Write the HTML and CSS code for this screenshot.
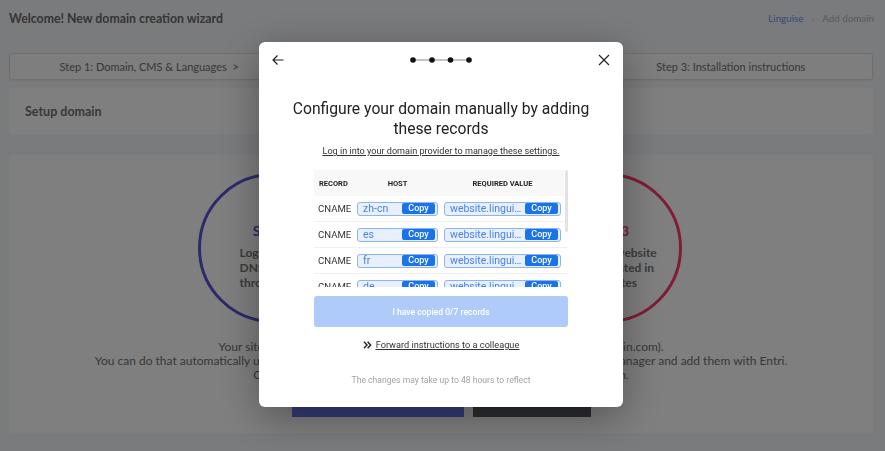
FILE: index.html
```html
<!DOCTYPE html>
<html>
  <head>
    <title>New domain creation wizard</title>
    <link rel="stylesheet" href="styles.css">
  </head>
  <body>
    <div class="page">
      <header class="topbar">
        <h1 class="page-title">Welcome! New domain creation wizard</h1>
        <nav class="crumbs">
          <a href="#">Linguise</a>
          <span class="sep">&rsaquo;</span>
          <span>Add domain</span>
        </nav>
      </header>

      <div class="steps">
        <div class="step step-first">Step 1: Domain, CMS &amp; Languages &nbsp;&gt;</div>
        <div class="step">Step 2: DNS configuration &nbsp;&gt;</div>
        <div class="step step-last">Step 3: Installation instructions</div>
      </div>

      <div class="card setup-head">Setup domain</div>

      <div class="card setup-body">
        <div class="circles">
          <div class="circle circle-blue">
            <h3>Step 1</h3>
            <p>Log in to your<br />DNS provider<br />through Entri</p>
          </div>
          <div class="circle circle-green">
            <h3>Step 2</h3>
            <p>Entri adds<br />the DNS records<br />for you</p>
          </div>
          <div class="circle circle-red">
            <h3>Step 3</h3>
            <p>Your new website<br />gets translated in<br />a few minutes</p>
          </div>
        </div>
        <div class="info">
          <p>Your site must be linked to Linguise through its DNS records (www.yourdomain.com).</p>
          <p>You can do that automatically using Entri: log in to a provider, Entri finds the records for your DNS manager and add them with Entri.</p>
          <p>Or you can copy each record and add it by yourself in your own domain.</p>
        </div>
        <div class="actions">
          <button class="btn btn-entri">Connect automatically with Entri</button>
          <button class="btn btn-dark">Add records manually</button>
        </div>
      </div>
    </div>

    <div class="overlay"></div>

    <div class="modal">
      <div class="modal-top">
        <button class="icon-btn" aria-label="Back">
          <svg width="12" height="12" viewBox="0 0 12 12">
            <path d="M11.5 6H1M5.5 1.5L1 6l4.5 4.5" fill="none" stroke="#222" stroke-width="1.2" />
          </svg>
        </button>
        <svg class="stepper" width="62" height="8" viewBox="0 0 62 8">
          <line x1="3" y1="4" x2="59" y2="4" stroke="#8a8a8a" stroke-width="1" />
          <circle cx="3" cy="4" r="2.8" fill="#111" />
          <circle cx="22" cy="4" r="2.8" fill="#111" />
          <circle cx="40.5" cy="4" r="2.8" fill="#111" />
          <circle cx="59" cy="4" r="2.8" fill="#111" />
        </svg>
        <button class="icon-btn" aria-label="Close">
          <svg width="12" height="12" viewBox="0 0 12 12">
            <path d="M1 1l10 10M11 1L1 11" fill="none" stroke="#222" stroke-width="1.2" />
          </svg>
        </button>
      </div>

      <h2 class="modal-title">Configure your domain manually by adding these records</h2>
      <a class="provider-link" href="#">Log in into your domain provider to manage these settings.</a>

      <div class="records-wrap">
        <div class="records">
          <div class="rec-row rec-head">
            <span class="head-type">Record</span>
            <span>Host</span>
            <span>Required value</span>
          </div>
          <div class="rec-row">
            <span class="rec-type">CNAME</span>
            <div class="field"><span class="field-val">zh-cn</span><button class="copy">Copy</button></div>
            <div class="field"><span class="field-val">website.linguise.com</span><button class="copy">Copy</button></div>
          </div>
          <div class="rec-row">
            <span class="rec-type">CNAME</span>
            <div class="field"><span class="field-val">es</span><button class="copy">Copy</button></div>
            <div class="field"><span class="field-val">website.linguise.com</span><button class="copy">Copy</button></div>
          </div>
          <div class="rec-row">
            <span class="rec-type">CNAME</span>
            <div class="field"><span class="field-val">fr</span><button class="copy">Copy</button></div>
            <div class="field"><span class="field-val">website.linguise.com</span><button class="copy">Copy</button></div>
          </div>
          <div class="rec-row">
            <span class="rec-type">CNAME</span>
            <div class="field"><span class="field-val">de</span><button class="copy">Copy</button></div>
            <div class="field"><span class="field-val">website.linguise.com</span><button class="copy">Copy</button></div>
          </div>
          <div class="rec-row">
            <span class="rec-type">CNAME</span>
            <div class="field"><span class="field-val">it</span><button class="copy">Copy</button></div>
            <div class="field"><span class="field-val">website.linguise.com</span><button class="copy">Copy</button></div>
          </div>
          <div class="rec-row">
            <span class="rec-type">CNAME</span>
            <div class="field"><span class="field-val">ja</span><button class="copy">Copy</button></div>
            <div class="field"><span class="field-val">website.linguise.com</span><button class="copy">Copy</button></div>
          </div>
          <div class="rec-row">
            <span class="rec-type">CNAME</span>
            <div class="field"><span class="field-val">pt</span><button class="copy">Copy</button></div>
            <div class="field"><span class="field-val">website.linguise.com</span><button class="copy">Copy</button></div>
          </div>
        </div>
        <div class="scroll-thumb"></div>
      </div>

      <button class="confirm" disabled>I have copied 0/7 records</button>

      <a class="forward" href="#">
        <svg width="9" height="8" viewBox="0 0 9 8">
          <path d="M1 0.8L4 4 1 7.2M4.6 0.8L7.6 4 4.6 7.2" fill="none" stroke="#222" stroke-width="1.4" />
        </svg>
        <span>Forward instructions to a colleague</span>
      </a>

      <p class="note">The changes may take up to 48 hours to reflect</p>
    </div>
  </body>
</html>
```

FILE: styles.css
```css
body {
  margin: 0;
  font-family: Lato, "Open Sans", sans-serif;
  background-color: #f5f6fa;
  color: #6c6c6c;
}

.page {
  width: 864px;
  margin-left: 9px;
}

.topbar {
  height: 36px;
  display: flex;
  align-items: center;
  justify-content: space-between;
}

.page-title {
  margin: 0;
  font-size: 12.3px;
  font-weight: 700;
  color: #6a6a6a;
}

.crumbs {
  font-size: 9.8px;
  color: #b4b4b4;
  display: flex;
  gap: 8px;
  margin-right: -1px;
}

.crumbs a {
  color: #6a96ec;
  text-decoration: none;
}

.sep {
  color: #c4c4c4;
}

.steps {
  margin-top: 17px;
  height: 27px;
  box-sizing: border-box;
  display: grid;
  grid-template-columns: 1fr 1fr 1fr;
  align-items: center;
  background-color: #fcfcfc;
  border: 1px solid #dedede;
  border-radius: 3px;
  box-shadow: 0 1px 2px rgba(0, 0, 0, 0.05);
}

.step {
  text-align: center;
  font-size: 11px;
  color: #707070;
}

.step-first {
  padding-right: 9px;
}

.step-last {
  padding-left: 5px;
}

.card {
  background-color: #ffffff;
  border-radius: 3px;
}

.setup-head {
  margin-top: 8px;
  height: 46px;
  display: flex;
  align-items: center;
  padding-left: 16px;
  font-size: 12.5px;
  font-weight: 700;
  color: #707070;
}

.setup-body {
  margin-top: 21px;
  padding: 18px 0 16px;
}

.circles {
  display: flex;
  justify-content: center;
  gap: 17px;
  padding-right: 3px;
}

.circle {
  width: 150px;
  height: 150px;
  box-sizing: border-box;
  border: 3px solid;
  border-radius: 50%;
  display: flex;
  flex-direction: column;
  justify-content: center;
  padding: 16px 8px 0 39px;
}

.circle h3 {
  margin: 0 0 6px -31px;
  font-size: 14px;
  text-align: center;
}

.circle p {
  margin: 0;
  font-size: 12px;
  line-height: 15px;
  font-weight: 700;
  color: #787878;
}

.circle-blue {
  border-color: #5a54d6;
}

.circle-blue h3 {
  color: #5a54d6;
}

.circle-green {
  border-color: #3cb87c;
}

.circle-green h3 {
  color: #3cb87c;
}

.circle-red {
  border-color: #ff3a6e;
  padding-left: 28px;
}

.circle-red h3 {
  color: #ff3a6e;
  margin-left: -14px;
}

.info {
  margin-top: 17px;
  text-align: center;
  font-size: 12px;
  line-height: 14px;
  color: #707070;
}

.info p {
  margin: 0;
}

.actions {
  margin-top: 5px;
  display: flex;
  justify-content: center;
  gap: 9px;
}

.btn {
  height: 30px;
  padding: 0 0 8px;
  border: none;
  color: #ffffff;
  font-family: inherit;
  font-size: 10px;
  font-weight: 700;
}

.btn-entri {
  width: 172px;
  background-color: #6876ee;
}

.btn-dark {
  width: 118px;
  background-color: #56585f;
}

.overlay {
  position: fixed;
  inset: 0;
  background-color: rgba(0, 0, 0, 0.5);
}

/* Entri modal */
.modal {
  position: fixed;
  left: 259px;
  top: 42px;
  width: 364px;
  height: 365px;
  box-sizing: border-box;
  padding: 10px 13px 20px;
  background-color: #ffffff;
  border-radius: 6px;
  box-shadow: 0 10px 40px rgba(0, 0, 0, 0.35);
  font-family: Roboto, sans-serif;
  color: #222222;
  display: flex;
  flex-direction: column;
  align-items: center;
}

.modal-top {
  width: 100%;
  height: 16px;
  display: flex;
  align-items: center;
  justify-content: space-between;
}

.icon-btn {
  border: none;
  background: none;
  padding: 0;
  width: 12px;
  height: 12px;
  display: flex;
}

.modal-title {
  margin: 31px 0 0;
  width: 310px;
  font-size: 15.7px;
  font-weight: 400;
  line-height: 20px;
  text-align: center;
}

.provider-link {
  margin-top: 5px;
  font-size: 9.1px;
  line-height: 14px;
  color: #333333;
}

.records-wrap {
  position: relative;
  margin-top: 12px;
  width: 254px;
  height: 117px;
}

.records {
  height: 100%;
  overflow: hidden;
}

.scroll-thumb {
  position: absolute;
  top: 0;
  right: 0;
  width: 3px;
  height: 62px;
  border-radius: 2px;
  background-color: #e2e2e2;
}

.rec-row {
  display: grid;
  grid-template-columns: 40px 87px 123px;
  align-items: center;
  height: 26px;
  border-bottom: 1px solid #f0f0f0;
  box-sizing: border-box;
}

.rec-head {
  width: 250px;
  background-color: #f8f8f9;
  border-bottom: none;
  font-size: 7.5px;
  font-weight: 700;
  text-transform: uppercase;
  text-align: center;
  color: #222222;
}

.head-type {
  text-align: left;
  padding-left: 5px;
}

.rec-type {
  padding-left: 4px;
  font-size: 9.6px;
  color: #333333;
}

.field {
  margin: 0 3px;
  height: 14px;
  box-sizing: border-box;
  border: 1px solid #8ab4f8;
  border-radius: 3px;
  background-color: #e8f0fe;
  display: flex;
  align-items: center;
  padding: 0 2px 0 5px;
}

.field-val {
  flex: 1;
  min-width: 0;
  overflow: hidden;
  text-overflow: ellipsis;
  white-space: nowrap;
  font-size: 10.5px;
  color: #4a82e6;
}

.copy {
  flex: none;
  width: 33px;
  height: 11px;
  margin-left: 3px;
  padding: 0;
  border: none;
  border-radius: 2px;
  background-color: #1a73e8;
  color: #ffffff;
  font-family: Roboto, sans-serif;
  font-size: 9px;
  font-weight: 500;
  line-height: 11px;
}

.confirm {
  margin-top: 9px;
  width: 254px;
  height: 31px;
  border: none;
  border-radius: 3px;
  background-color: #aecbfa;
  color: #ffffff;
  font-family: Roboto, sans-serif;
  font-size: 8.6px;
  font-weight: 500;
}

.forward {
  margin-top: 11px;
  display: flex;
  align-items: center;
  gap: 4px;
  font-size: 9.2px;
  line-height: 14px;
  color: #333333;
}

.forward span {
  text-decoration: underline;
}

.note {
  margin: 21px 0 0;
  font-size: 8.6px;
  line-height: 14px;
  color: #a3a3a3;
}
```
